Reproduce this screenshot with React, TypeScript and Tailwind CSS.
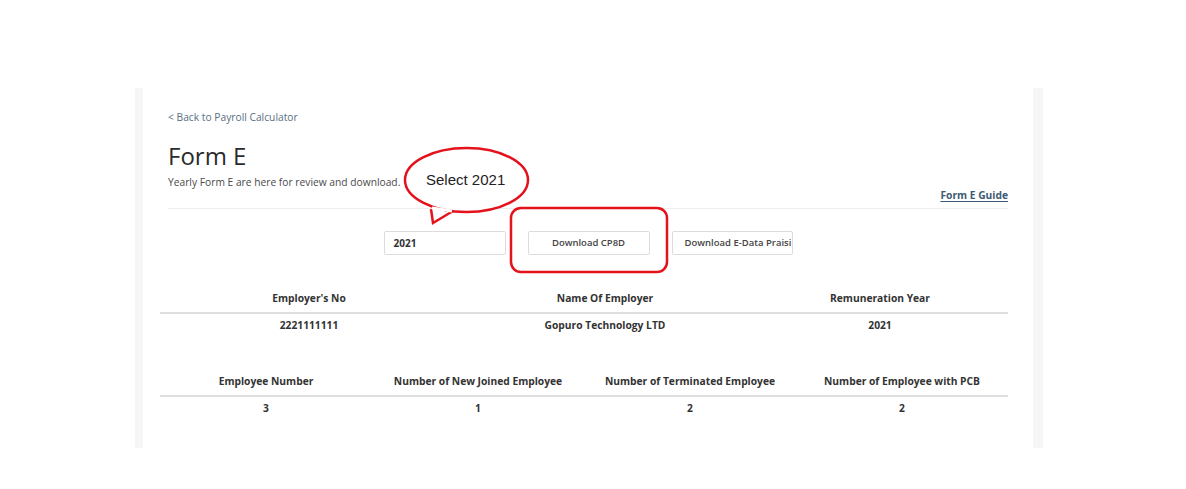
const summary = [
  { label: "Employer's No", value: '2221111111' },
  { label: 'Name Of Employer', value: 'Gopuro Technology LTD' },
  { label: 'Remuneration Year', value: '2021' }
];

const counts = [
  { label: 'Employee Number', value: '3' },
  { label: 'Number of New Joined Employee', value: '1' },
  { label: 'Number of Terminated Employee', value: '2' },
  { label: 'Number of Employee with PCB', value: '2' }
];

const Callout = () => (
  <>
    <svg
      className="absolute left-0 top-0 pointer-events-none"
      width={1186}
      height={489}
      viewBox="0 0 1186 489">
      <path
        d="M431 209 L433 223 L453 211"
        fill="white"
        stroke="#e3121b"
        strokeWidth={2.5}
        strokeLinejoin="miter"
      />
      <ellipse
        cx={466.5}
        cy={180}
        rx={61.5}
        ry={32}
        fill="white"
        stroke="#e3121b"
        strokeWidth={2.5}
      />
      <path d="M432 208 L452 211" stroke="white" strokeWidth={3} />
      <rect
        x={511}
        y={208}
        width={156}
        height={64}
        rx={10}
        fill="none"
        stroke="#e3121b"
        strokeWidth={2.5}
      />
    </svg>
    <div className="absolute left-[426px] top-[171px] text-[15px] leading-[18px] text-[#222] font-['Liberation_Sans',sans-serif]">
      Select 2021
    </div>
  </>
);

export default function App() {
  return (
    <div className="relative w-[1186px] h-[489px] bg-white font-['Open_Sans',sans-serif] text-[#333] overflow-hidden">
      <div className="ml-[135px] mt-[88px] w-[908px] h-[360px] border-l-[8px] border-r-[10px] border-[#f6f6f6]">
        <div className="h-full bg-white pl-[25px] pr-[25px] pt-[21px]">
          <a className="block text-[10.25px] leading-[16px] text-[#5a6f84]">
            &lt; Back to Payroll Calculator
          </a>
          <div className="flex justify-between items-end mt-[16px]">
            <div className="pb-[13px]">
              <h1 className="text-[24px] leading-[30px] font-medium text-[#2b2b2b]">
                Form E
              </h1>
              <p className="mt-[3px] text-[10.25px] leading-[16px] text-[#4a4a4a]">
                Yearly Form E are here for review and download.
              </p>
            </div>
            <a className="text-[10.25px] leading-[16px] font-bold text-[#3d5a74] underline underline-offset-2">
              Form E Guide
            </a>
          </div>
          <div className="mt-[5px] border-t border-[#eeeeee]" />

          <div className="mt-[22px] flex justify-center gap-[22px]">
            <div className="w-[122px] h-[24px] border border-[#dcdcdc] rounded-[2px] flex items-center pl-[9px] text-[10px] font-bold text-[#333]">
              2021
            </div>
            <button className="w-[122px] h-[24px] border border-[#dcdcdc] rounded-[2px] text-[9.5px] font-semibold text-[#444] bg-white">
              Download CP8D
            </button>
            <button className="w-[121px] h-[24px] border border-[#dcdcdc] rounded-[2px] text-[9.5px] font-semibold text-[#444] bg-white overflow-hidden whitespace-nowrap text-left pl-[12px]">
              Download E-Data Praisi
            </button>
          </div>

          <div className="ml-[-8px] mt-[29px] grid grid-cols-[298px_294px_1fr] text-[10.25px] leading-[16px] font-bold text-[#333]">
            {summary.map((s) => (
              <div key={s.label} className="text-center py-[6px] border-b-2 border-[#dedede]">
                {s.label}
              </div>
            ))}
            {summary.map((s) => (
              <div key={s.label + 'v'} className="text-center py-[3px]">
                {s.value}
              </div>
            ))}
          </div>

          <div className="ml-[-8px] mt-[31px] grid grid-cols-4 text-[10.25px] leading-[16px] font-bold text-[#333]">
            {counts.map((c) => (
              <div key={c.label} className="text-center py-[6px] border-b-2 border-[#dedede]">
                {c.label}
              </div>
            ))}
            {counts.map((c) => (
              <div key={c.label + 'v'} className="text-center py-[3px]">
                {c.value}
              </div>
            ))}
          </div>
        </div>
      </div>
      <Callout />
    </div>
  );
}
